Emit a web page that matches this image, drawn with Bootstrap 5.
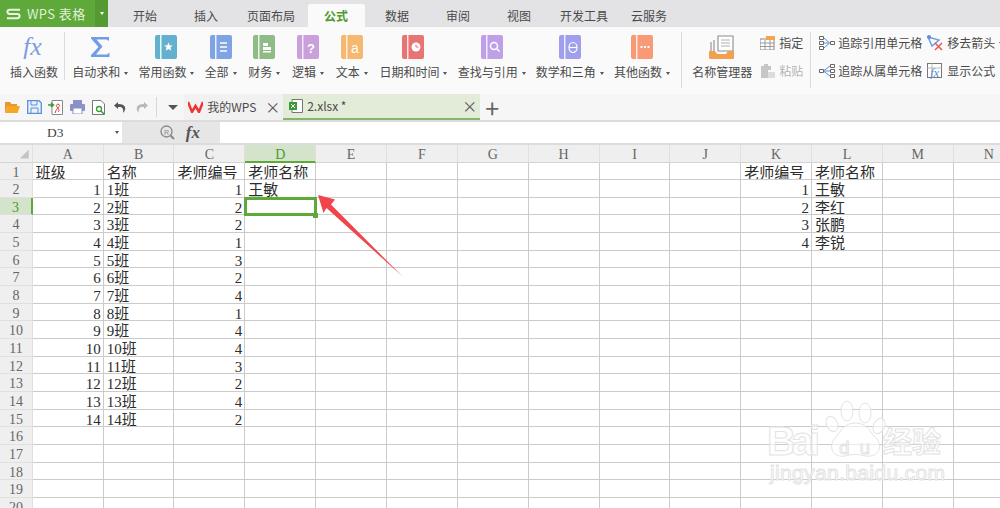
<!doctype html>
<html lang="zh"><head><meta charset="utf-8"><title>WPS 表格</title>
<link href="https://cdn.jsdelivr.net/npm/bootstrap@5.3.0/dist/css/bootstrap.min.css" rel="stylesheet">
<style>
html,body{height:508px;overflow:hidden}
body{font:12px/16px "Noto Sans CJK SC",sans-serif;color:#4a4a4a;background:#fff}
.app{width:1000px;height:508px;position:relative}
.app>*{flex-shrink:0}
.tabbar{height:27px;background:#e3e3e5}
.logo{width:108px;background:#5fa83a;color:#dff0d6;font-size:13px;letter-spacing:.4px}
.logo-main{width:95px;padding-left:6px}
.logo-s{margin-right:6px}
.logo-drop{width:13px;background:#549a33}
.tri{display:inline-block;border:2.5px solid transparent;border-top:3px solid #555;border-bottom:0;margin-left:4px;vertical-align:2px}
.tri-w{border-top-color:#fff;margin:0}
.tri-big{border-width:5px 5px 0;margin:0 6px 0 3px}
.tabs{padding-left:8.5px;gap:4px;padding-top:4px}
.wtab{width:57px;height:23px;text-align:center;line-height:24px;color:#4a4a4a}
.wtab-w{width:65px}
.wtab-on{background:#fafafa;color:#4f9a2c;font-weight:700;border-radius:2px 2px 0 0}
.ribbon{height:67px;background:#fafafa;padding:8px 0 0 10px;overflow:hidden}
.rb{margin-right:10.2px;white-space:nowrap}
.rb-s{margin-right:11.7px}
.rb-n{margin-right:8px}
.rb-ic{height:24px;margin-bottom:5px}
.rb-lbl{height:16px}
.rsep{width:1px;height:48px;margin:-3px 7px 0 -4px;background:#dcdcdc;flex:none}
.rsep-t{height:56px;margin:-3px 10px 0 1px}
.rsep-u{height:56px;margin:-3px 8px 0 0}
.mcol{margin-top:-6px;margin-right:7px}
.mcol-t{margin-right:5px}
.mini{height:28px;white-space:nowrap}
.mini svg{flex:none;margin-right:4px}
.mini-t svg{margin-right:3px}
.mini-off{color:#b5b5b5}
.qat{height:26px;background:#f6f6f6;padding-left:5px}
.qic{width:15px;margin-right:6.6px;flex:none}
.qsep{width:1px;height:20px;background:#d8d8d8;margin:0 8px 0 0}
.dtab{height:26px;white-space:nowrap;font-size:12px}
.dtab-a{width:99px;background:#f1f1f1;padding:0 3px 0 4px}
.dtab-b{width:197px;background:#e3ecd9;border-bottom:2px solid #86b569;padding:0 3px 0 6px}
.xmark{margin-left:auto;font-size:15px;line-height:14px;color:#555}
.plus{font-size:25px;line-height:22px;color:#666;margin-left:5px}
.fbar{height:25px;background:#e6e6e6;border-top:2px solid #dcdcdc;border-bottom:2px solid #dcdcdc}
.namebox{width:122px;background:#fff;font:13.5px "Liberation Serif",serif;color:#444;position:relative;padding-left:47px;line-height:21px}
.namebox .tri{position:absolute;right:3px;top:9px;margin:0}
.fxarea{width:98px;color:#666;padding-right:20px}
.fxt{font:italic 700 17px "Liberation Serif",serif;margin-left:11px;color:#555}
.finput{flex:1;background:#fff}
.sheet{display:grid;grid-template-columns:32.8px repeat(14,70.85px);grid-template-rows:17.5px repeat(20,17.66px);width:1027px;font:15px/20px "Liberation Serif","Noto Sans CJK SC",serif;color:#2d2d2d}
.hc,.rc,.cc{border-right:1px solid #cbcbcb;border-bottom:1px solid #cbcbcb;overflow:hidden;white-space:nowrap}
.hc,.rc{background:#efefef;color:#666;text-align:center;font-size:14px;border-color:#e0e0e0;line-height:20px}
.hc{border-bottom-color:#d4d4d4}
.corner{position:relative}
.corner::after{content:"";position:absolute;right:3px;bottom:3px;width:9px;height:9px;background:#c4c4c4;clip-path:polygon(100% 0,100% 100%,0 100%)}
.hc-on{background:#d3e4cb;color:#4f9a2c;border-bottom:2px solid #5fa83a}
.rc-on{background:#d3e4cb;color:#4f9a2c;border-right:2px solid #5fa83a}
.cc{padding:0 3px;background:transparent}
.cc-n{text-align:right;padding-right:2px}
.cc-on{position:relative;outline:3px solid #5fa83a;outline-offset:-2px}
.overlay{position:absolute;left:0;top:0;pointer-events:none}
</style></head><body>
<div class="app d-flex flex-column overflow-hidden">

<div class="tabbar d-flex">
  <div class="logo d-flex">
    <div class="logo-main d-flex align-items-center"><svg class="logo-s" width="15" height="12" viewBox="0 0 16 12"><path d="M15 1.500H4Q1.500 1.500 1.500 3.700T4 6H12Q14.500 6 14.500 8.200T12 10.500H1" fill="none" stroke="#e8f5e0" stroke-width="2.200"/></svg><span>WPS 表格</span></div>
    <div class="logo-drop d-flex align-items-center justify-content-center"><i class="tri tri-w"></i></div>
  </div>
  <div class="tabs d-flex">
    <div class="wtab">开始</div><div class="wtab">插入</div><div class="wtab wtab-w">页面布局</div><div class="wtab wtab-on">公式</div><div class="wtab">数据</div><div class="wtab">审阅</div><div class="wtab">视图</div><div class="wtab wtab-w">开发工具</div><div class="wtab">云服务</div>
  </div>
</div>

<div class="ribbon d-flex align-items-start">
  <div class="rb text-center"><div class="rb-ic"><svg width="30" height="24"><text x="4" y="20" font-family="Liberation Serif" font-style="italic" font-size="26" fill="#7d9fe0">fx</text></svg></div><div class="rb-lbl">插入函数</div></div>
  <div class="rsep"></div>
  <div class="rb text-center"><div class="rb-ic"><svg width="22" height="24" viewBox="0 0 22 24"><path d="M2 2H20V6L17.500 4.500H7.500L13.500 11.500L7 19.500H18L20.500 17.500V22H2V20L9.500 12L2 3.500Z" fill="#6f9de6"/></svg></div><div class="rb-lbl">自动求和<i class="tri"></i></div></div>
  <div class="rb text-center"><div class="rb-ic"><svg width="22" height="24"><rect width="22" height="24" rx="2" fill="#66b0cf"/><rect x="5" width="1.500" height="24" fill="#dff"/><path d="M13.500 7.500l1.300 3h3l-2.400 2 .9 3.200-2.800-1.800-2.800 1.800.9-3.200-2.400-2h3z" fill="#fff"/></svg></div><div class="rb-lbl">常用函数<i class="tri"></i></div></div>
  <div class="rb rb-s text-center"><div class="rb-ic"><svg width="22" height="24"><rect width="22" height="24" rx="2" fill="#7fa3e3"/><rect x="5" width="1.500" height="24" fill="#e8efff"/><path d="M10 8h7M10 12h7M10 16h7" stroke="#fff" stroke-width="1.300"/></svg></div><div class="rb-lbl">全部<i class="tri"></i></div></div>
  <div class="rb rb-s text-center"><div class="rb-ic"><svg width="22" height="24"><rect width="22" height="24" rx="2" fill="#8fbc86"/><rect x="5" width="1.500" height="24" fill="#eaf5e5"/><path d="M10 8h5v3h-5zM10 12h8v3h-8zM10 16h8v1.500h-8z" fill="#fff"/></svg></div><div class="rb-lbl">财务<i class="tri"></i></div></div>
  <div class="rb rb-s text-center"><div class="rb-ic"><svg width="22" height="24"><rect width="22" height="24" rx="2" fill="#c9a0dc"/><rect x="5" width="1.500" height="24" fill="#f4e9fa"/><text x="10" y="18" font-family="Liberation Sans" font-weight="700" font-size="13" fill="#fff">?</text></svg></div><div class="rb-lbl">逻辑<i class="tri"></i></div></div>
  <div class="rb rb-s text-center"><div class="rb-ic"><svg width="22" height="24"><rect width="22" height="24" rx="2" fill="#f6b76e"/><rect x="5" width="1.500" height="24" fill="#fdeedd"/><text x="10" y="18" font-family="Liberation Sans" font-size="14" fill="#fff">a</text></svg></div><div class="rb-lbl">文本<i class="tri"></i></div></div>
  <div class="rb text-center"><div class="rb-ic"><svg width="22" height="24"><rect width="22" height="24" rx="2" fill="#e97474"/><rect x="5" width="1.500" height="24" fill="#fde5e5"/><circle cx="14" cy="12" r="4.500" fill="#fff"/><path d="M14 9.500V12H16.500" stroke="#e97474" fill="none"/></svg></div><div class="rb-lbl">日期和时间<i class="tri"></i></div></div>
  <div class="rb text-center"><div class="rb-ic"><svg width="22" height="24"><rect width="22" height="24" rx="2" fill="#bf9fe8"/><rect x="5" width="1.500" height="24" fill="#f1e9fc"/><circle cx="13" cy="11" r="3.500" fill="none" stroke="#fff" stroke-width="1.500"/><path d="M15.500 13.500L18.500 16.500" stroke="#fff" stroke-width="1.500"/></svg></div><div class="rb-lbl">查找与引用<i class="tri"></i></div></div>
  <div class="rb text-center"><div class="rb-ic"><svg width="22" height="24"><rect width="22" height="24" rx="2" fill="#9f9fee"/><rect x="5" width="1.500" height="24" fill="#ebebfd"/><ellipse cx="14" cy="12.500" rx="4" ry="5" fill="none" stroke="#fff" stroke-width="1.200"/><path d="M10 12.500h8" stroke="#fff" stroke-width="1.200"/></svg></div><div class="rb-lbl">数学和三角<i class="tri"></i></div></div>
  <div class="rb text-center"><div class="rb-ic"><svg width="22" height="24"><rect width="22" height="24" rx="2" fill="#f89a75"/><rect x="5" width="1.500" height="24" fill="#feeae2"/><path d="M9.500 12h2M13 12h2M16.500 12h2" stroke="#fff" stroke-width="2"/></svg></div><div class="rb-lbl">其他函数<i class="tri"></i></div></div>
  <div class="rsep rsep-t"></div>
  <div class="rb rb-n text-center"><div class="rb-ic"><svg width="26" height="24" viewBox="0 0 26 24"><path d="M2 7v13M5 5v15M9 1h15v15H9z" fill="#fff" stroke="#8c8c8c" stroke-width="1.100"/><path d="M12 5h9M12 8h9M12 11h9" stroke="#b0b0b0"/><path d="M0 16H6L8 19H17L19 16H25V23Q25 24 24 24H1Q0 24 0 23Z" fill="#f2a04f"/></svg></div><div class="rb-lbl">名称管理器</div></div>
  <div class="mcol d-flex flex-column">
    <div class="mini d-flex align-items-center"><svg width="15" height="14"><rect x="0" y="3" width="14" height="11" fill="#fff" stroke="#888"/><rect x="6" y="0" width="9" height="4" fill="#f3a44f"/><path d="M0 7h14M0 10.500h14M5 4v10M10 4v10" stroke="#999"/></svg><span>指定</span></div>
    <div class="mini mini-off d-flex align-items-center"><svg width="15" height="16"><path d="M1 3h3V1h4v2h3v4H8v8H1z" fill="#c6c6c6"/><rect x="8" y="9" width="7" height="6" fill="#dcdcdc"/></svg><span>粘贴</span></div>
  </div>
  <div class="rsep rsep-u"></div>
  <div class="mcol mcol-t d-flex flex-column">
    <div class="mini mini-t d-flex align-items-center"><svg width="16" height="14"><path d="M.5 .5h4v3h-4zM.5 5.500h4v3h-4zM.5 10.500h4v3h-4zM11.500 5.500h4v3h-4z" fill="#fff" stroke="#666"/><path d="M5 2L10 6.500M5 7h6M5 12L10 7.500" stroke="#5b8fd8"/></svg><span>追踪引用单元格</span></div>
    <div class="mini mini-t d-flex align-items-center"><svg width="16" height="14"><path d="M11.500 .5h4v3h-4zM11.500 5.500h4v3h-4zM11.500 10.500h4v3h-4zM.5 5.500h4v3h-4z" fill="#fff" stroke="#666"/><path d="M5 6.500L11 2M5 7h6M5 7.500L11 12" stroke="#5b8fd8"/></svg><span>追踪从属单元格</span></div>
  </div>
  <div class="mcol d-flex flex-column">
    <div class="mini d-flex align-items-center"><svg width="16" height="16"><path d="M1 2L12 5L5 11Z" fill="none" stroke="#6f9de6" stroke-width="1.500"/><circle cx="2" cy="2" r="2" fill="#5b8fd8"/><path d="M8 8L15 15M15 8L8 15" stroke="#e55" stroke-width="1.500"/></svg><span>移去箭头</span><i class="tri"></i></div>
    <div class="mini d-flex align-items-center"><svg width="16" height="16"><rect x=".5" y=".5" width="14" height="14" fill="#fff" stroke="#777"/><path d="M.5 5h14M5 .5v14" stroke="#bbb"/><text x="3" y="14" font-family="Liberation Serif" font-style="italic" font-size="13" fill="#5b8fd8">fx</text></svg><span>显示公式</span></div>
  </div>
</div>

<div class="qat d-flex align-items-center">
  <svg class="qic" width="15" height="13"><path d="M0 1h5l1.500 2H12v2H3L0 12Z" fill="#e69a2e"/><path d="M3 5H15L12.500 12H0Z" fill="#f5a623"/></svg>
  <svg class="qic" width="15" height="14"><path d="M.7.7H12L14.300 3V13.300H.7Z" fill="#eaf1fb" stroke="#5b8fd8" stroke-width="1.300"/><path d="M4 1v4h6V1M4 13V8h7v5" fill="none" stroke="#5b8fd8"/></svg>
  <svg class="qic" width="15" height="15"><path d="M4 .5H14.500V14.500H4Z" fill="#fff" stroke="#888"/><path d="M0 5H5M3 3L5.500 5 3 7" stroke="#3a9a3a" stroke-width="1.500" fill="none"/><path d="M7 13C9 7 13 6 11 4.500S7.500 6 9 7 12 11 10 12" stroke="#d33" fill="none"/></svg>
  <svg class="qic" width="15" height="14"><rect x="3" width="9" height="4" fill="#8a90c8"/><rect y="4" width="15" height="7" rx="1" fill="#8a90c8"/><rect x="3" y="8" width="9" height="6" fill="#fff" stroke="#8a90c8"/></svg>
  <svg class="qic" width="15" height="15"><path d="M1.500.5H10L13.500 4V14.500H1.500Z" fill="#fff" stroke="#777"/><circle cx="8" cy="9" r="2.500" fill="none" stroke="#3a9a3a" stroke-width="1.300"/><path d="M10 11L13 14" stroke="#3a9a3a" stroke-width="1.500"/></svg>
  <svg class="qic" width="14" height="13"><path d="M5 1L1 4.500 5 8V6C9 5.500 11 7 10 12 14 8 13 3 5 3Z" fill="#555"/></svg>
  <svg class="qic" width="14" height="13"><path d="M9 1L13 4.500 9 8V6C5 5.500 3 7 4 12 0 8 1 3 9 3Z" fill="#b8b8b8"/></svg>
  <div class="qsep"></div>
  <i class="tri tri-big"></i>
  <div class="dtab dtab-a d-flex align-items-center"><svg width="15" height="12" viewBox="0 0 15 12" class="me-1"><path d="M0 1L4 11 7.500 5 11 11 15 1" fill="none" stroke="#e33" stroke-width="2.500"/></svg><span>我的WPS</span><span class="xmark">×</span></div>
  <div class="dtab dtab-b d-flex align-items-center"><svg width="14" height="14" class="me-1"><path d="M3 .5H13.500V13.500H3Z" fill="#fff" stroke="#777"/><rect y="3" width="8" height="8" fill="#3a9a3a"/><path d="M2 5l4 4M6 5l-4 4" stroke="#fff"/></svg><span>2.xlsx *</span><span class="xmark">×</span></div>
  <span class="plus">+</span>
</div>

<div class="fbar d-flex">
  <div class="namebox">D3<i class="tri"></i></div>
  <div class="fxarea d-flex align-items-center justify-content-end">
    <svg width="15" height="15"><circle cx="6.500" cy="6.500" r="5.500" fill="none" stroke="#888" stroke-width="1.300"/><path d="M10.500 10.500L14 14" stroke="#888" stroke-width="2"/><text x="4" y="9.500" font-family="Liberation Sans" font-size="7" fill="#888">R</text></svg>
    <span class="fxt">fx</span>
  </div>
  <div class="finput"></div>
</div>

<div class="sheet" id="grid"></div>

<svg class="overlay" width="1000" height="508" viewBox="0 0 1000 508">
  <path d="M318 195L335 199.500 331 204.500 402 276 326.500 208 323.500 213Z" fill="#f1454b"/>
  <rect x="313" y="213" width="5" height="5" fill="#5fa83a"/>
  <g fill="rgba(255,255,255,.62)" stroke="#e3e3e3" stroke-width="1">
    <text x="767" y="455" font-family="Liberation Sans" font-weight="700" font-size="40" textLength="53">Bai</text>
    <ellipse cx="847" cy="411" rx="6" ry="10"/><ellipse cx="865" cy="413" rx="6" ry="10"/>
    <ellipse cx="832" cy="424" rx="5.500" ry="8" transform="rotate(-25 832 424)"/><ellipse cx="879" cy="426" rx="5.500" ry="8" transform="rotate(25 879 426)"/>
    <path d="M855 423C868 423 870 433 876 438 884 446 878 458 866 456 858 454 852 454 845 456 832 458 828 446 835 438 840 433 843 423 855 423Z"/>
    <text x="839" y="454" font-family="Liberation Sans" font-size="19" textLength="31">du</text>
    <text x="883" y="453" font-family="Noto Sans CJK SC" font-weight="700" font-size="29">经验</text>
    <text x="770" y="480" font-family="Liberation Sans" font-size="21" textLength="175">jingyan.baidu.com</text>
  </g>
</svg>
</div>
<script>
const cols='ABCDEFGHIJKLMN'.split('');
const data={1:{A:'班级',B:'名称',C:'老师编号',D:'老师名称',K:'老师编号',L:'老师名称'},2:{D:'王敏',K:1,L:'王敏'},3:{K:2,L:'李红'},4:{K:3,L:'张鹏'},5:{K:4,L:'李锐'}};
[1,2,2,1,3,2,4,1,4,4,3,2,4,2].forEach((t,i)=>{const r=i+2;data[r]=Object.assign(data[r]||{},{A:i+1,B:(i+1)+'班',C:t});});
const g=document.getElementById('grid');let h='<div class="hc corner"></div>';
cols.forEach(c=>h+=`<div class="hc${c==='D'?' hc-on':''}">${c}</div>`);
for(let r=1;r<=20;r++){h+=`<div class="rc${r===3?' rc-on':''}">${r}</div>`;
cols.forEach(c=>{const v=(data[r]||{})[c];const n=typeof v==='number';h+=`<div class="cc${n?' cc-n':''}${c==='D'&&r===3?' cc-on':''}">${v===undefined?'':v}</div>`;});}
g.innerHTML=h;
</script>
</body></html>
